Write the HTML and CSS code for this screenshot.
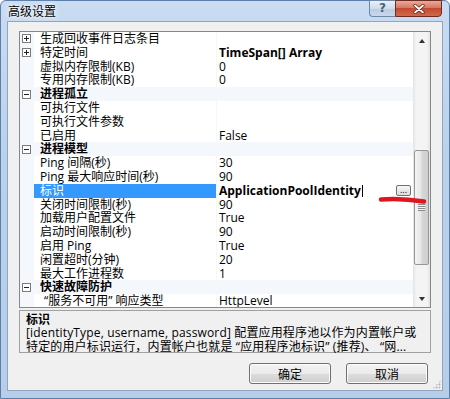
FILE: index.html
```html
<!DOCTYPE html>
<html lang="zh-CN">
<head>
    <meta charset="UTF-8">
    <title>高级设置</title>
    <link rel="stylesheet" href="styles.css">
</head>
<body>
    <div class="window">
        <div class="titlebar">
            <span class="title">高级设置</span>
            <div class="caption">
                <div class="cap-help">?</div>
                <div class="cap-close">
                    <svg width="12" height="10" viewBox="0 0 12 10"><path d="M2 1.5l8 7M10 1.5l-8 7" stroke="#5a1a10" stroke-width="3.2" stroke-linecap="round"/><path d="M2 1.5l8 7M10 1.5l-8 7" stroke="#fff" stroke-width="1.8" stroke-linecap="round"/></svg>
                </div>
            </div>
        </div>
        <div class="client">
            <div class="grid">
                <div class="rows">
                    <div class="row"><span class="gutter"><svg class="box" width="9" height="9"><rect x=".5" y=".5" width="8" height="8" fill="#fff" stroke="#7b7b7b"/><path d="M2 4.5h5M4.5 2v5" stroke="#222"/></svg></span><span class="name">生成回收事件日志条目</span><span class="value"></span></div>
                    <div class="row"><span class="gutter"><svg class="box" width="9" height="9"><rect x=".5" y=".5" width="8" height="8" fill="#fff" stroke="#7b7b7b"/><path d="M2 4.5h5M4.5 2v5" stroke="#222"/></svg></span><span class="name">特定时间</span><span class="value bold">TimeSpan[] Array</span></div>
                    <div class="row"><span class="gutter"></span><span class="name">虚拟内存限制(KB)</span><span class="value">0</span></div>
                    <div class="row"><span class="gutter"></span><span class="name">专用内存限制(KB)</span><span class="value">0</span></div>
                    <div class="row cat"><span class="gutter"><svg class="box" width="9" height="9"><rect x=".5" y=".5" width="8" height="8" fill="#fff" stroke="#7b7b7b"/><path d="M2 4.5h5" stroke="#222"/></svg></span><span class="name">进程孤立</span></div>
                    <div class="row"><span class="gutter"></span><span class="name">可执行文件</span><span class="value"></span></div>
                    <div class="row"><span class="gutter"></span><span class="name">可执行文件参数</span><span class="value"></span></div>
                    <div class="row"><span class="gutter"></span><span class="name">已启用</span><span class="value">False</span></div>
                    <div class="row cat"><span class="gutter"><svg class="box" width="9" height="9"><rect x=".5" y=".5" width="8" height="8" fill="#fff" stroke="#7b7b7b"/><path d="M2 4.5h5" stroke="#222"/></svg></span><span class="name">进程模型</span></div>
                    <div class="row"><span class="gutter"></span><span class="name">Ping 间隔(秒)</span><span class="value">30</span></div>
                    <div class="row"><span class="gutter"></span><span class="name">Ping 最大响应时间(秒)</span><span class="value">90</span></div>
                    <div class="row sel"><span class="gutter"></span><span class="name">标识</span><span class="value bold"><span class="edit">ApplicationPoolIdentity</span><span class="dots">...</span></span></div>
                    <div class="row"><span class="gutter"></span><span class="name">关闭时间限制(秒)</span><span class="value">90</span></div>
                    <div class="row"><span class="gutter"></span><span class="name">加载用户配置文件</span><span class="value">True</span></div>
                    <div class="row"><span class="gutter"></span><span class="name">启动时间限制(秒)</span><span class="value">90</span></div>
                    <div class="row"><span class="gutter"></span><span class="name">启用 Ping</span><span class="value">True</span></div>
                    <div class="row"><span class="gutter"></span><span class="name">闲置超时(分钟)</span><span class="value">20</span></div>
                    <div class="row"><span class="gutter"></span><span class="name">最大工作进程数</span><span class="value">1</span></div>
                    <div class="row cat"><span class="gutter"><svg class="box" width="9" height="9"><rect x=".5" y=".5" width="8" height="8" fill="#fff" stroke="#7b7b7b"/><path d="M2 4.5h5" stroke="#222"/></svg></span><span class="name">快速故障防护</span></div>
                    <div class="row"><span class="gutter"></span><span class="name indent">“服务不可用” 响应类型</span><span class="value">HttpLevel</span></div>
                </div>
                <div class="scrollbar">
                    <div class="sb-btn"><span class="arrow-up"></span></div>
                    <div class="sb-track">
                        <div class="sb-thumb"><span class="grip"></span></div>
                    </div>
                    <div class="sb-btn"><span class="arrow-down"></span></div>
                </div>
            </div>
            <div class="help">
                <div class="help-title">标识</div>
                <div class="help-text">[identityType, username, password] 配置应用程序池以作为内置帐户或</div>
                <div class="help-text">特定的用户标识运行，内置帐户也就是 “应用程序池标识” (推荐)、 “网...</div>
            </div>
            <div class="actions">
                <button class="btn">确定</button>
                <button class="btn">取消</button>
            </div>
            <div class="grip-corner"></div>
        </div>
        <svg class="mark" width="50" height="12" viewBox="0 0 50 12">
            <path d="M3 5.5 C 14 4.5, 30 5, 46 7.5" stroke="#e0161f" stroke-width="4.5" stroke-linecap="round" fill="none"/>
        </svg>
    </div>
</body>
</html>
```

FILE: styles.css
```css
body {
    margin: 0;
    padding: 0;
    font-family: "Open Sans", "Noto Sans CJK SC", sans-serif;
    font-size: 12px;
    color: #000;
    background: #fff;
}
.window {
    position: relative;
    width: 450px;
    height: 399px;
    box-sizing: border-box;
    border: 1px solid #5d7ea9;
    border-radius: 6px 6px 0 0;
    padding: 0 6px 7px 6px;
    display: flex;
    flex-direction: column;
    background: linear-gradient(to bottom, #c9dcf1 0%, #bad1ea 40%, #b8cee8 100%);
}
.titlebar {
    height: 20px;
    display: flex;
    justify-content: space-between;
    align-items: flex-start;
}
.title {
    padding: 3px 0 0 1px;
    line-height: 15px;
    font-size: 12px;
    text-shadow: 0 0 6px #fff, 0 0 3px #fff;
}
.caption {
    display: flex;
    margin-top: -1px;
    margin-right: 1px;
}
.cap-help {
    width: 26px;
    height: 17px;
    box-sizing: border-box;
    border: 1px solid #6f87a6;
    border-right: none;
    border-radius: 0 0 0 4px;
    background: linear-gradient(to bottom, #e9f0f8 0%, #cfdcec 50%, #b9cbe1 51%, #c8d8ec 100%);
    color: #4b5f7a;
    font-weight: bold;
    font-size: 12px;
    line-height: 15px;
    text-align: center;
    font-family: "DejaVu Sans", sans-serif;
}
.cap-close {
    width: 47px;
    height: 17px;
    box-sizing: border-box;
    border: 1px solid #6b2c22;
    border-radius: 0 0 4px 0;
    background: linear-gradient(to bottom, #e9a99b 0%, #d57a63 45%, #c34a2f 50%, #d2694c 100%);
    display: flex;
    align-items: center;
    justify-content: center;
}
.client {
    position: relative;
    flex: 1;
    background: #f0f0f0;
    border: 1px solid #8ea5c3;
    padding: 9px 11px 0 11px;
    display: flex;
    flex-direction: column;
}
.grid {
    height: 277px;
    box-sizing: border-box;
    border: 1px solid #828790;
    background: #fff;
    display: flex;
    overflow: hidden;
}
.rows {
    flex: 1;
}
.row {
    display: grid;
    grid-template-columns: 14px 183px 1fr;
    height: 13.8px;
    line-height: 13.8px;
    white-space: nowrap;
}
.gutter {
    background: #f4f7fc;
    display: flex;
    align-items: center;
    padding-left: 2px;
}
.name {
    padding-left: 6px;
    border-right: 1px solid #f4f7fc;
}
.name.indent {
    padding-left: 10px;
}
.value {
    padding-left: 2px;
    display: flex;
    align-items: center;
}
.bold {
    font-weight: bold;
}
.row.cat {
    background: #f4f7fc;
    grid-template-columns: 14px 1fr;
}
.row.cat .name {
    font-weight: bold;
    border-right: none;
}
.row.sel .name {
    background: #3399ff;
    color: #fff;
}
.edit {
    border-right: 1px solid #000;
    padding-right: 1px;
    line-height: 12px;
}
.dots {
    margin-left: auto;
    margin-right: 2px;
    width: 15px;
    height: 11px;
    box-sizing: border-box;
    border: 1px solid #707070;
    border-radius: 2px;
    background: linear-gradient(#f6f6f6, #dcdcdc);
    font-weight: normal;
    font-size: 9px;
    line-height: 7px;
    text-align: center;
    color: #000;
}
.scrollbar {
    width: 17px;
    display: flex;
    flex-direction: column;
    background: linear-gradient(to right, #e4e4e4, #f4f4f4 20%, #f4f4f4 80%, #e4e4e4);
}
.sb-btn {
    height: 17px;
    display: flex;
    align-items: center;
    justify-content: center;
}
.arrow-up {
    width: 0;
    height: 0;
    border-left: 3.5px solid transparent;
    border-right: 3.5px solid transparent;
    border-bottom: 4px solid #333;
}
.arrow-down {
    width: 0;
    height: 0;
    border-left: 3.5px solid transparent;
    border-right: 3.5px solid transparent;
    border-top: 4px solid #333;
}
.sb-track {
    flex: 1;
}
.sb-thumb {
    margin: 101px 1px 0 1px;
    height: 115px;
    box-sizing: border-box;
    border: 1px solid #979797;
    border-radius: 2px;
    background: linear-gradient(to right, #f4f4f4, #e6e6e6 45%, #d6d6d6 55%, #cfcfcf);
    display: flex;
    align-items: center;
    justify-content: center;
}
.grip {
    width: 7px;
    height: 7px;
    background: repeating-linear-gradient(to bottom, #8a8a8a 0, #8a8a8a 1px, #f2f2f2 1px, #f2f2f2 2px);
}
.help {
    margin-top: 2px;
    height: 43px;
    box-sizing: border-box;
    border: 1px solid #a0a0a0;
    padding: 2px 6px 0 6px;
    line-height: 13.4px;
    white-space: nowrap;
}
.help-title {
    font-weight: bold;
}
.help-text {
    letter-spacing: 0.15px;
}
.actions {
    margin-top: 10px;
    padding-right: 3px;
    display: flex;
    justify-content: flex-end;
    gap: 15px;
}
.btn {
    width: 82px;
    height: 21px;
    padding: 0;
    font-family: "Open Sans", "Noto Sans CJK SC", sans-serif;
    font-size: 12px;
    color: #000;
    border: 1px solid #707070;
    border-radius: 3px;
    background: linear-gradient(to bottom, #f2f2f2 0%, #ebebeb 50%, #dddddd 51%, #cfcfcf 100%);
    box-shadow: inset 0 0 0 1px #fcfcfc;
}
.grip-corner {
    position: absolute;
    right: 1px;
    bottom: 1px;
    width: 9px;
    height: 9px;
    background: radial-gradient(circle, #b5b5b5 0.8px, transparent 1.2px) 0 0 / 3px 3px;
    clip-path: polygon(100% 0, 100% 100%, 0 100%);
}
.mark {
    position: absolute;
    left: 377px;
    top: 193px;
}
```
